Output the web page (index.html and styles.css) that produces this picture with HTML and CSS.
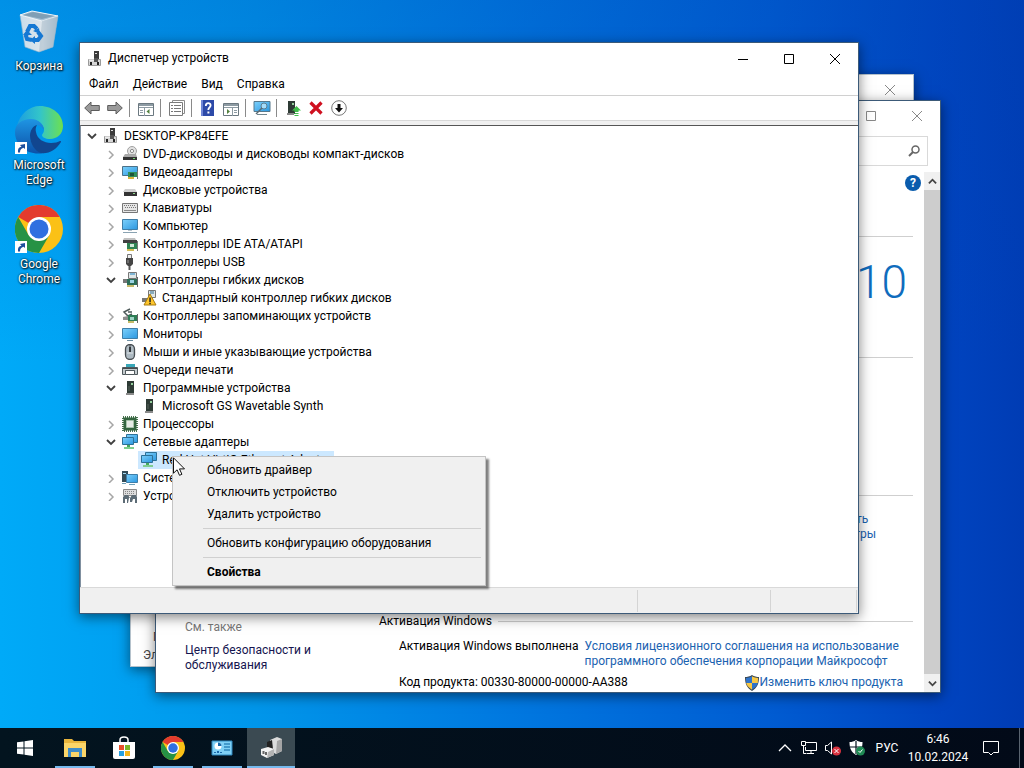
FILE: index.html
```
<!DOCTYPE html>
<html lang="ru">
<head>
  <meta charset="UTF-8">
  <title>Диспетчер устройств</title>
  <link rel="stylesheet" href="styles.css">
</head>
<body>

  <!-- Иконки -->
  <svg class="sprite" aria-hidden="true">
    <defs>
      <linearGradient id="g-scr" x1="0" y1="0" x2="1" y2="1"><stop offset="0" stop-color="#7cd0fb"/><stop offset="1" stop-color="#2b97e0"/></linearGradient>
      <linearGradient id="g-bin" x1="0" y1="0" x2="1" y2="0"><stop offset="0" stop-color="#c9dcea"/><stop offset=".6" stop-color="#dfe6ec"/><stop offset="1" stop-color="#9fb9cd"/></linearGradient>
      <linearGradient id="g-edge1" x1="0" y1="0" x2="1" y2="0"><stop offset="0" stop-color="#1c9de0"/><stop offset=".5" stop-color="#33c5c9"/><stop offset="1" stop-color="#6ee04f"/></linearGradient>
      <linearGradient id="g-edge2" x1="0" y1="0" x2="0" y2="1"><stop offset="0" stop-color="#1f95e3"/><stop offset="1" stop-color="#0c51a8"/></linearGradient>
    </defs>

    <symbol id="i-root" viewBox="0 0 16 16">
      <path d="M7 0h5v9H7z" fill="#3b3b3b"/><path d="M8 2h2v1H8z" fill="#ddd"/>
      <path d="M1.500 8.500h12v6h-12z" fill="#d6d6d6" stroke="#9a9a9a"/><path d="M7 7h4v4H7z" fill="#555"/>
      <path d="M3 11h2v3H3zM10 11h2v3h-2z" fill="#222"/><path d="M2 9h5" stroke="#fff"/>
    </symbol>
    <symbol id="i-dvd" viewBox="0 0 16 16">
      <circle cx="10" cy="5" r="4.500" fill="#e2e2e2" stroke="#a0a0a0"/><circle cx="10" cy="5" r="1.600" fill="#fff" stroke="#8a8a8a"/>
      <path d="M3 8h11l1 3H1z" fill="#a9a9a9"/><path d="M1 11h14v3H1z" fill="#333"/><path d="M11 12h2v1h-2z" fill="#6fd46f"/>
    </symbol>
    <symbol id="i-video" viewBox="0 0 16 16">
      <path d="M.5 2.500h15v9H.5z" fill="url(#g-scr)" stroke="#4c7188"/>
      <path d="M6 8h9v5H6z" fill="#2f8f5b"/><path d="M8 9h4v3H8z" fill="#1e5438"/><path d="M6 13h6v2H6z" fill="#d9b13b"/><path d="M15.500 7v8" stroke="#777"/>
    </symbol>
    <symbol id="i-disk" viewBox="0 0 16 16">
      <path d="M3 7h10l2 3H1z" fill="#cfcfcf"/><path d="M2 10h13v4H2z" fill="#333"/><path d="M11 11h2v1h-2z" fill="#8fd88f"/>
    </symbol>
    <symbol id="i-keyb" viewBox="0 0 16 16">
      <path d="M.5 3.500h15v9H.5z" fill="#e6e6e6" stroke="#777"/>
      <path d="M2 5.500h12M3 7.500h12" stroke="#777" stroke-dasharray="1 1"/><path d="M2 10.500h12" stroke="#888"/>
    </symbol>
    <symbol id="i-pc" viewBox="0 0 16 16">
      <path d="M.5 1.500h15v10H.5z" fill="url(#g-scr)" stroke="#3e7ea8"/><path d="M1 14.500h14" stroke="#8aa3b2"/><path d="M6 12h4v1H6z" fill="#b9c6cf"/>
    </symbol>
    <symbol id="i-ide" viewBox="0 0 16 16">
      <path d="M2 2h11l1 2H1z" fill="#c0c0c0"/><path d="M1 4h14v3H1z" fill="#404040"/>
      <path d="M5 7h10v6H5z" fill="#2f8253"/><path d="M8 8h4v3H8z" fill="#cfe8d8"/><path d="M5 13h7v2H5z" fill="#d3bd57"/><path d="M15.500 5v10" stroke="#777"/>
    </symbol>
    <symbol id="i-usb" viewBox="0 0 16 16">
      <path d="M5.500.5h4v4h-4z" fill="#eee" stroke="#777"/><path d="M4 4h7v6l-2 2H6l-2-2z" fill="#454545"/><path d="M7.500 12v4" stroke="#555" stroke-width="2"/><path d="M6 6v3" stroke="#999"/>
    </symbol>
    <symbol id="i-fdc" viewBox="0 0 16 16">
      <path d="M6.500.5h8v6h-8z" fill="#dfe6e6" stroke="#777"/><path d="M8 1h5v2H8z" fill="#7eb4d4"/>
      <path d="M1 7h8v4H1z" fill="#777"/><path d="M5 7h10v6H5z" fill="#2d6e59"/><path d="M8 8h4v3H8z" fill="#9ed3e5"/><path d="M5 13h7v2H5z" fill="#c7ba6a"/><path d="M15.500 5v10" stroke="#666"/>
    </symbol>
    <symbol id="i-warn" viewBox="0 0 16 16">
      <path d="M7.500.5h7v7h-7z" fill="#dfe6e6" stroke="#777"/><path d="M9 1h4v3H9z" fill="#8ab"/><path d="M1 8h6v4H1z" fill="#777"/>
      <path d="M9 4l6 11H3z" fill="#ffc62b" stroke="#a77b10"/><path d="M8.300 7.500h1.500V12H8.300zM8.300 12.800h1.500v1.400H8.300z" fill="#222"/>
    </symbol>
    <symbol id="i-stor" viewBox="0 0 16 16">
      <path d="M8 1L2 4l4 4 4-2M6 4h4" stroke="#4f5b5b" stroke-width="1.500" fill="none"/>
      <path d="M1 9l5-1h2v4H1z" fill="#8d8d8d"/><path d="M6 7h9v6H6z" fill="#2e7d55"/><path d="M8 9h4v3H8z" fill="#9ed3c5"/><path d="M6 13h6v2H6z" fill="#c7ba6a"/><path d="M15.500 6v9" stroke="#666"/>
    </symbol>
    <symbol id="i-mon" viewBox="0 0 16 16">
      <path d="M.5 2.500h15v10H.5z" fill="url(#g-scr)" stroke="#3e7ea8"/><path d="M5 14.500h6" stroke="#6c8ea3"/>
    </symbol>
    <symbol id="i-mouse" viewBox="0 0 16 16">
      <rect x="3.500" y=".5" width="9" height="15" rx="4.500" fill="#aebac2" stroke="#474d52" stroke-width="1.300"/><path d="M8 1v7" stroke="#474d52"/><rect x="7" y="3" width="2" height="5" fill="#33383c"/><path d="M5 9h6" stroke="#dfe5e9"/>
    </symbol>
    <symbol id="i-print" viewBox="0 0 16 16">
      <path d="M4 2h9v3H4z" fill="#38a7b8"/><path d="M.5 12.500v-7h15v7h-3v-4h-9v4z" fill="#c3cacd" stroke="#4f585c"/><path d="M3.500 8.500h9v4h-9z" fill="#fff" stroke="#4f585c"/><path d="M1 6.500h14" stroke="#454b4e"/>
    </symbol>
    <symbol id="i-soft" viewBox="0 0 16 16">
      <path d="M5 1h7v12H5z" fill="#2e3b35"/><path d="M9 3h2v2H9z" fill="#95cf9d"/><path d="M4 13h8v2H4z" fill="#8b8b8b"/><path d="M7 6v5" stroke="#56655d"/>
    </symbol>
    <symbol id="i-cpu" viewBox="0 0 16 16">
      <path d="M1 1h14v14H1z" fill="none" stroke="#48734f" stroke-width="2" stroke-dasharray="1 1"/><path d="M1.500 1.500h13v13h-13z" fill="#34653f"/><path d="M4.500 4.500h7v7h-7z" fill="#e6ece6" stroke="#a7c3aa"/>
    </symbol>
    <symbol id="i-net" viewBox="0 0 16 16">
      <path d="M4.500.5h11v8h-11z" fill="url(#g-scr)" stroke="#2d7096"/><path d="M.5 3.500h11v7H.5z" fill="url(#g-scr)" stroke="#2d7096"/>
      <path d="M5 11h3v2H5z" fill="#46a75e"/><path d="M2 13h10v2H2z" fill="#7fce8e"/>
    </symbol>
    <symbol id="i-sys" viewBox="0 0 16 16">
      <path d="M0 1h6v11H0z" fill="#334c59"/><path d="M1 3h3v1H1z" fill="#a5dcf5"/><path d="M4.500 4.500h11v8h-11z" fill="url(#g-scr)" stroke="#3e7ea8"/><path d="M0 13.500h4M7 14.500h6" stroke="#6fa0b8"/>
    </symbol>
    <symbol id="i-hid" viewBox="0 0 16 16">
      <path d="M1.500 1.500h13v6h-13z" fill="#ddd" stroke="#8a8a8a"/><path d="M3 3.500h10M3 5.500h10" stroke="#888" stroke-dasharray="1 1"/>
      <path d="M1 15V9l2-2h3l2 3 2-3h4l1 2v6h-2v-4h-2l-1 3H8v-4H7l-1 5H5v-4H3v4z" fill="#5c6b75"/>
    </symbol>

    <symbol id="t-back" viewBox="0 0 16 16"><path d="M.7 8L7 2v3.500h8.300v5H7V14z" fill="#9a9a9a" stroke="#5c5c5c"/></symbol>
    <symbol id="t-fwd" viewBox="0 0 16 16"><path d="M15.300 8L9 2v3.500H.7v5H9V14z" fill="#9a9a9a" stroke="#5c5c5c"/></symbol>
    <symbol id="t-tree" viewBox="0 0 16 16"><path d="M.5 3.500h15v12H.5z" fill="#fff" stroke="#6b7880"/><path d="M1 4h14v2H1z" fill="#8d9ba3"/><path d="M1 7.500h14M6.500 7v9" stroke="#8d9ba3"/><path d="M2 10.500h3M2 12.500h3" stroke="#8d9ba3"/><path d="M11.500 9v5l-3-2.500z" fill="#53813f"/></symbol>
    <symbol id="t-prop" viewBox="0 0 16 16"><path d="M3.500.5h12v13h-12z" fill="#fff" stroke="#8b8b8b"/><path d="M.5 2.500h13v13H.5z" fill="#fff" stroke="#7a7a7a"/><path d="M5 5.500h7M5 8.500h7M5 11.500h7" stroke="#777"/><path d="M2 5.500h2M2 8.500h2M2 11.500h2" stroke="#777"/></symbol>
    <symbol id="t-help" viewBox="0 0 16 16"><path d="M1 0h13v16H1z" fill="#2d4aa8"/><path d="M1 0h2v16H1z" fill="#6f86d6"/><path d="M5.800 6c0-3.800 5-3.500 4.800-.5C10.500 7.300 8.300 7.500 8.300 10" fill="none" stroke="#fff" stroke-width="1.800"/><path d="M7.400 11.500h2v2h-2z" fill="#fff"/></symbol>
    <symbol id="t-act" viewBox="0 0 16 16"><path d="M.5 3.500h15v12H.5z" fill="#fff" stroke="#6b7880"/><path d="M1 4h14v2H1z" fill="#8d9ba3"/><path d="M1 7.500h14M9.500 7v9" stroke="#8d9ba3"/><path d="M11 10.500h3M11 12.500h3" stroke="#8d9ba3"/><path d="M4 9v5l3-2.500z" fill="#53813f"/></symbol>
    <symbol id="t-scan" viewBox="0 0 18 16"><path d="M1 1.500h16v10H1z" fill="url(#g-scr)" stroke="#56788c"/><path d="M4 14.500h10" stroke="#71858f"/><circle cx="11" cy="6" r="3" fill="#a5dcfa" stroke="#5d7f91"/><path d="M9 8l-6 6" stroke="#5b6a72" stroke-width="1.500"/></symbol>
    <symbol id="t-upd" viewBox="0 0 16 16"><path d="M3 1h7v13H3z" fill="#2e3b35"/><path d="M7 3h2v2H7z" fill="#95cf9d"/><path d="M2 13h7v2H2z" fill="#888"/><path d="M11.500 6l4.500 4.500h-2.500V12H9.500v-1.500H7z" fill="#41bd4b"/><path d="M9.500 13h4v1h-4zM9.500 15h4v1h-4z" fill="#41bd4b"/></symbol>
    <symbol id="t-del" viewBox="0 0 16 16"><path d="M2.500 2.500l11 11M13.500 2.500l-11 11" stroke="#cf1020" stroke-width="3.200"/></symbol>
    <symbol id="t-down" viewBox="0 0 16 16"><circle cx="8" cy="8" r="7.300" fill="#fff" stroke="#777"/><path d="M6.500 4h3v4H12l-4 4.500L4 8h2.500z" fill="#111"/></symbol>

    <symbol id="d-bin" viewBox="0 0 48 48">
      <path d="M5 8l5 32 14 5 14-5 5-31z" fill="url(#g-bin)" stroke="#8fb3cf" stroke-width=".6"/>
      <path d="M5 8l12-4 26 5-16 5z" fill="#a5c0d3" stroke="#edf4f8"/><path d="M8 8l10-3 21 4-12 3z" fill="#7f9fb5"/>
      <path d="M27 14l-3 31 14-5 5-31z" fill="#a8bccb" opacity=".55"/>
      <g fill="none" stroke="#1678d3" stroke-width="4"><path d="M12 25l3-6h4l3 3"/><path d="M23 25l3 4-3 4h-4"/><path d="M17 33l-5-1-1-3 1-3"/></g>
      <path d="M18 24l6-3 1 6zM20 29v8l-5-4zM8 28l4-5 5 5z" fill="#1678d3"/>
    </symbol>
    <symbol id="d-edge" viewBox="0 0 48 48">
      <path d="M2 20C5 8 14 0 25 0c13 0 23 9 23 20 0 8-6 13-13 13-5 0-8-2-8-4 0-1 2-2 2-5 0-6-6-10-12-10C10 14 4 17 2 20z" fill="url(#g-edge1)"/>
      <path d="M0 26C0 18 7 13 16 13c8 0 13 6 13 11 0 0-3-5-7-5-4 0-7 5-7 11 0 9 7 16 14 17-16 3-29-7-29-21z" fill="url(#g-edge2)"/>
      <path d="M15 30c0-6 3-10 7-11 0 0-2 3-1 7 1 7 8 11 15 11 4 0 7-1 9-2 1 0 1 0 1 1-5 8-12 12-20 11-6-2-11-9-11-17z" fill="#11468f"/>
    </symbol>
    <symbol id="d-chrome" viewBox="0 0 48 48">
      <circle cx="24" cy="24" r="24" fill="#fbc116"/>
      <path d="M24 24L3.200 12A24 24 0 0 1 44.800 12H24z" fill="#e33b2e"/>
      <path d="M3.200 12A24 24 0 0 0 24 48l10.400-18L24 36 13.600 30z" fill="#269245"/>
      <circle cx="24" cy="24" r="12" fill="#fff"/><circle cx="24" cy="24" r="9.500" fill="#2f6fe0"/>
    </symbol>
    <symbol id="d-short" viewBox="0 0 12 12"><path d="M0 0h12v12H0z" fill="#fff"/><path d="M3 10.500C2.500 7 4 5 6.500 4.800L5 3l5-1v5L8.500 5.700C6 6.500 5 8 5 10.500z" fill="#1d4f9c"/></symbol>
    <symbol id="s-shield" viewBox="0 0 16 16">
      <path d="M8 0c2 1.500 5 2 7 2 0 7-2 11-7 14C3 13 1 9 1 2c2 0 5-.5 7-2z" fill="#3a4650"/>
      <path d="M8 1.300V8H2.200C2 6 2 4.500 2 3c2 0 4-.5 6-1.700z" fill="#2f73c9"/><path d="M8 1.300V8h5.800C14 6 14 4.500 14 3c-2 0-4-.5-6-1.700z" fill="#f7c743"/>
      <path d="M8 8v6.800C4.500 12.500 2.700 10.500 2.200 8z" fill="#f7c743"/><path d="M8 8v6.800c3.500-2.300 5.300-4.300 5.800-6.800z" fill="#2f73c9"/>
    </symbol>
    <symbol id="c-open" viewBox="0 0 10 10"><path d="M1 3l4 4 4-4" fill="none" stroke="#404040" stroke-width="1.800"/></symbol>
    <symbol id="c-shut" viewBox="0 0 10 10"><path d="M3 2l4 4-4 4" fill="none" stroke="#a6a6a6" stroke-width="1.500"/></symbol>
    <symbol id="w-close" viewBox="0 0 10 10"><path d="M0 0l10 10M10 0L0 10" stroke="currentColor" fill="none"/></symbol>
    <symbol id="w-max" viewBox="0 0 10 10"><path d="M.5.5h9v9h-9z" stroke="currentColor" fill="none"/></symbol>
    <symbol id="w-min" viewBox="0 0 10 10"><path d="M0 5.500h10" stroke="currentColor" fill="none"/></symbol>
  </svg>

  <div class="desktop">
    <div class="shortcuts">
      <a class="shortcut" href="#">
        <span class="shortcut-pic"><svg><use href="#d-bin"/></svg></span>
        <span>Корзина</span>
      </a>
      <a class="shortcut" href="#">
        <span class="shortcut-pic"><svg><use href="#d-edge"/></svg><svg class="arrow"><use href="#d-short"/></svg></span>
        <span>Microsoft<br>Edge</span>
      </a>
      <a class="shortcut" href="#">
        <span class="shortcut-pic"><svg><use href="#d-chrome"/></svg><svg class="arrow"><use href="#d-short"/></svg></span>
        <span>Google<br>Chrome</span>
      </a>
    </div>

    <!-- Панель управления -->
    <section class="window panel-window">
      <header class="titlebar inactive">
        <button class="win-btn" aria-label="Закрыть"><svg><use href="#w-close"/></svg></button>
      </header>
      <div class="panel-body">
        <span class="panel-item indent">П</span>
        <span class="panel-item">Эл</span>
      </div>
    </section>

    <!-- Система -->
    <section class="window system-window">
      <header class="titlebar inactive">
        <button class="win-btn" aria-label="Развернуть"><svg><use href="#w-max"/></svg></button>
        <button class="win-btn" aria-label="Закрыть"><svg><use href="#w-close"/></svg></button>
      </header>
      <div class="address">
        <input class="search" type="text" aria-label="Поиск">
        <svg class="search-icon" viewBox="0 0 12 12"><circle cx="7.500" cy="4.500" r="3.500" fill="none" stroke="#666" stroke-width="1.500"/><path d="M5 7L1 11" stroke="#666" stroke-width="2"/></svg>
      </div>
      <div class="system-body">
        <aside class="see-also">
          <span class="muted">См. также</span>
          <a href="#">Центр безопасности и<br>обслуживания</a>
        </aside>
        <main class="system-main">
          <div class="block"></div>
          <div class="block ruled edition"><span>10</span></div>
          <div class="block ruled"></div>
          <div class="block ruled change"><a href="#">Изменить<br>параметры</a></div>
          <div class="activation">
            <h2>Активация Windows</h2>
            <div class="activation-row">
              <span>Активация Windows выполнена</span>
              <a href="#">Условия лицензионного соглашения на использование<br>программного обеспечения корпорации Майкрософт</a>
            </div>
            <div class="activation-row key-row">
              <span>Код продукта: 00330-80000-00000-AA388</span>
              <a class="key-link" href="#"><svg><use href="#s-shield"/></svg>Изменить ключ продукта</a>
            </div>
          </div>
        </main>
        <button class="help" aria-label="Справка">?</button>
        <div class="scrollbar">
          <button aria-label="Вверх"><svg viewBox="0 0 10 10"><path d="M1 7l4-4 4 4" fill="none" stroke="#444" stroke-width="2"/></svg></button>
          <div class="thumb"></div>
          <button aria-label="Вниз"><svg viewBox="0 0 10 10"><path d="M1 3l4 4 4-4" fill="none" stroke="#444" stroke-width="2"/></svg></button>
        </div>
      </div>
    </section>

    <!-- Диспетчер устройств -->
    <section class="window device-window">
      <header class="titlebar">
        <svg class="ico"><use href="#i-root"/></svg>
        <h1>Диспетчер устройств</h1>
        <button class="win-btn" aria-label="Свернуть"><svg><use href="#w-min"/></svg></button>
        <button class="win-btn" aria-label="Развернуть"><svg><use href="#w-max"/></svg></button>
        <button class="win-btn" aria-label="Закрыть"><svg><use href="#w-close"/></svg></button>
      </header>
      <nav class="menubar">
        <button>Файл</button>
        <button>Действие</button>
        <button>Вид</button>
        <button>Справка</button>
      </nav>
      <div class="toolbar">
        <button aria-label="Назад"><svg class="ico"><use href="#t-back"/></svg></button>
        <button aria-label="Вперед"><svg class="ico"><use href="#t-fwd"/></svg></button>
        <i class="sep"></i>
        <button aria-label="Дерево консоли"><svg class="ico"><use href="#t-tree"/></svg></button>
        <i class="sep"></i>
        <button aria-label="Свойства"><svg class="ico"><use href="#t-prop"/></svg></button>
        <i class="sep"></i>
        <button aria-label="Справка"><svg class="ico"><use href="#t-help"/></svg></button>
        <button aria-label="Панель действий"><svg class="ico"><use href="#t-act"/></svg></button>
        <i class="sep"></i>
        <button aria-label="Обновить конфигурацию"><svg class="ico wide"><use href="#t-scan"/></svg></button>
        <i class="sep"></i>
        <button aria-label="Обновить драйвер"><svg class="ico"><use href="#t-upd"/></svg></button>
        <button aria-label="Удалить"><svg class="ico"><use href="#t-del"/></svg></button>
        <button aria-label="Отключить"><svg class="ico"><use href="#t-down"/></svg></button>
      </div>

      <div class="tree">
        <div class="node"><button class="tog" aria-label="Свернуть"><svg><use href="#c-open"/></svg></button><svg class="ico"><use href="#i-root"/></svg><span>DESKTOP-KP84EFE</span></div>
        <div class="level">
          <div class="node"><button class="tog" aria-label="Развернуть"><svg><use href="#c-shut"/></svg></button><svg class="ico"><use href="#i-dvd"/></svg><span>DVD-дисководы и дисководы компакт-дисков</span></div>
          <div class="node"><button class="tog" aria-label="Развернуть"><svg><use href="#c-shut"/></svg></button><svg class="ico"><use href="#i-video"/></svg><span>Видеоадаптеры</span></div>
          <div class="node"><button class="tog" aria-label="Развернуть"><svg><use href="#c-shut"/></svg></button><svg class="ico"><use href="#i-disk"/></svg><span>Дисковые устройства</span></div>
          <div class="node"><button class="tog" aria-label="Развернуть"><svg><use href="#c-shut"/></svg></button><svg class="ico"><use href="#i-keyb"/></svg><span>Клавиатуры</span></div>
          <div class="node"><button class="tog" aria-label="Развернуть"><svg><use href="#c-shut"/></svg></button><svg class="ico"><use href="#i-pc"/></svg><span>Компьютер</span></div>
          <div class="node"><button class="tog" aria-label="Развернуть"><svg><use href="#c-shut"/></svg></button><svg class="ico"><use href="#i-ide"/></svg><span>Контроллеры IDE ATA/ATAPI</span></div>
          <div class="node"><button class="tog" aria-label="Развернуть"><svg><use href="#c-shut"/></svg></button><svg class="ico"><use href="#i-usb"/></svg><span>Контроллеры USB</span></div>
          <div class="node"><button class="tog" aria-label="Свернуть"><svg><use href="#c-open"/></svg></button><svg class="ico"><use href="#i-fdc"/></svg><span>Контроллеры гибких дисков</span></div>
          <div class="level leaf">
            <div class="node"><svg class="ico"><use href="#i-warn"/></svg><span>Стандартный контроллер гибких дисков</span></div>
          </div>
          <div class="node"><button class="tog" aria-label="Развернуть"><svg><use href="#c-shut"/></svg></button><svg class="ico"><use href="#i-stor"/></svg><span>Контроллеры запоминающих устройств</span></div>
          <div class="node"><button class="tog" aria-label="Развернуть"><svg><use href="#c-shut"/></svg></button><svg class="ico"><use href="#i-mon"/></svg><span>Мониторы</span></div>
          <div class="node"><button class="tog" aria-label="Развернуть"><svg><use href="#c-shut"/></svg></button><svg class="ico"><use href="#i-mouse"/></svg><span>Мыши и иные указывающие устройства</span></div>
          <div class="node"><button class="tog" aria-label="Развернуть"><svg><use href="#c-shut"/></svg></button><svg class="ico"><use href="#i-print"/></svg><span>Очереди печати</span></div>
          <div class="node"><button class="tog" aria-label="Свернуть"><svg><use href="#c-open"/></svg></button><svg class="ico"><use href="#i-soft"/></svg><span>Программные устройства</span></div>
          <div class="level leaf">
            <div class="node"><svg class="ico"><use href="#i-soft"/></svg><span>Microsoft GS Wavetable Synth</span></div>
          </div>
          <div class="node"><button class="tog" aria-label="Развернуть"><svg><use href="#c-shut"/></svg></button><svg class="ico"><use href="#i-cpu"/></svg><span>Процессоры</span></div>
          <div class="node"><button class="tog" aria-label="Свернуть"><svg><use href="#c-open"/></svg></button><svg class="ico"><use href="#i-net"/></svg><span>Сетевые адаптеры</span></div>
          <div class="level leaf">
            <div class="node selected"><svg class="ico"><use href="#i-net"/></svg><span>Red Hat VirtIO Ethernet Adapter</span></div>
          </div>
          <div class="node"><button class="tog" aria-label="Развернуть"><svg><use href="#c-shut"/></svg></button><svg class="ico"><use href="#i-sys"/></svg><span>Системные устройства</span></div>
          <div class="node"><button class="tog" aria-label="Развернуть"><svg><use href="#c-shut"/></svg></button><svg class="ico"><use href="#i-hid"/></svg><span>Устройства HID</span></div>
        </div>
      </div>
      <footer class="statusbar"><span></span><span></span><span></span></footer>
    </section>

    <!-- Контекстное меню -->
    <div class="context-menu">
      <button>Обновить драйвер</button>
      <button>Отключить устройство</button>
      <button>Удалить устройство</button>
      <hr>
      <button>Обновить конфигурацию оборудования</button>
      <hr>
      <button class="default">Свойства</button>
    </div>
    <svg class="cursor" viewBox="0 0 12 19"><path d="M.5.800v15.400l3.600-3.400 2.400 5.500 2.400-1-2.400-5.400h5z" fill="#fff" stroke="#111"/></svg>
  </div>

  <!-- Панель задач -->
  <footer class="taskbar">
    <button class="task start" aria-label="Пуск"><svg viewBox="0 0 16 16"><path d="M0 2.300L6.500 1.400v6.100H0zM7.500 1.200L16 0v7.500H7.500zM0 8.500h6.500v6.100L0 13.700zM7.500 8.500H16V16l-8.500-1.200z" fill="#fff"/></svg></button>
    <button class="task open" aria-label="Проводник"><svg class="big" viewBox="0 0 24 24"><path d="M1 3h8l2 2h12v16H1z" fill="#e9b53c"/><path d="M1 7h22v14H1z" fill="#fbd568"/><path d="M5 12h14v9h-3v-5H8v5H5z" fill="#3f8cc8"/></svg></button>
    <button class="task" aria-label="Microsoft Store"><svg class="big" viewBox="0 0 24 24"><path d="M8 7V4c0-4 8-4 8 0v3" fill="none" stroke="#fff" stroke-width="1.500"/><path d="M1 6h22v15q0 2-2 2H3q-2 0-2-2z" fill="#fff"/><path d="M7 9h5v5H7z" fill="#e8502a"/><path d="M13 9h5v5h-5z" fill="#7cb727"/><path d="M7 15h5v5H7z" fill="#28a0e0"/><path d="M13 15h5v5h-5z" fill="#f5b51b"/></svg></button>
    <button class="task open" aria-label="Google Chrome"><svg class="big"><use href="#d-chrome"/></svg></button>
    <button class="task open" aria-label="Панель управления"><svg class="big" viewBox="0 0 24 24"><path d="M2 5h20v14H2z" fill="#7fd0f5" stroke="#2f86bd"/><circle cx="8" cy="10" r="3.500" fill="#fff"/><path d="M8 10V6.500a3.500 3.500 0 0 1 3.500 3.500z" fill="#1b68a8"/><path d="M14 8h6M14 11h6M14 14h6" stroke="#2f86bd" stroke-width="1.500"/><path d="M4 16h2v1H4zM7 15h2v2H7zM10 16h2v1h-2z" fill="#1b68a8"/></svg></button>
    <button class="task open active" aria-label="Диспетчер устройств"><svg class="big" viewBox="0 0 24 24"><path d="M11 4l7-3 5 2v12l-6 3-6-3z" fill="#dcdcdc"/><path d="M18 5l5-2v12l-6 3z" fill="#a5a5a5"/><path d="M8 6l5-2 1 9-6-1z" fill="#222"/><path d="M2 13l7-2 6 2v6l-7 3-6-3z" fill="#f2f2f2"/><path d="M9 16l6-3v6l-7 3z" fill="#b4b4b4"/><path d="M3.500 15h2v3h-2zM6 16h2v3H6z" fill="#666"/></svg></button>

    <div class="tray">
      <button class="tray-btn" aria-label="Скрытые значки"><svg viewBox="0 0 16 16"><path d="M2 11l6-6 6 6" fill="none" stroke="#fff" stroke-width="1.300"/></svg></button>
      <button class="tray-btn" aria-label="Сеть"><svg viewBox="0 0 16 16"><path d="M4.500 2.500h11v8h-11M4.500 7v3.500M10 10.500v3M6 13.500h7M.5 1.500h4v4h-4zM2.500 5.500v8h3" fill="none" stroke="#fff"/></svg></button>
      <button class="tray-btn" aria-label="Звук"><svg viewBox="0 0 16 16"><path d="M.5 5.500h2l4-3.500v12l-4-3.500h-2z" fill="none" stroke="#fff"/><circle cx="11.500" cy="11" r="4.500" fill="#d8323f"/><path d="M9.500 9l4 4M13.500 9l-4 4" stroke="#fff"/></svg></button>
      <button class="tray-btn" aria-label="Безопасность"><svg viewBox="0 0 16 16"><path d="M7 0c2 1.500 4 2 6.500 2 0 7-2 10-6.500 13C2.500 12 .5 9 .5 2 3 2 5 1.500 7 0z" fill="#fff"/><path d="M7 1v13M1 7h12" stroke="#03101c" stroke-width="1.200"/><circle cx="11.500" cy="11" r="4.500" fill="#1f8a54"/><path d="M9.500 11l1.500 1.500 2.500-3" stroke="#fff" fill="none"/></svg></button>
      <button class="lang">РУС</button>
      <button class="clock">6:46<br>10.02.2024</button>
      <button class="notify" aria-label="Уведомления"><svg viewBox="0 0 16 16"><path d="M.5 1.500h15v11h-5L8 15l-2.500-2.500h-5z" fill="none" stroke="#fff"/></svg></button>
      <button class="peek" aria-label="Показать рабочий стол"></button>
    </div>
  </footer>

</body>
</html>
```
FILE: styles.css
```
* {
  box-sizing: border-box;
}
html, body {
  height: 100%;
}
body {
  margin: 0;
  display: flex;
  flex-direction: column;
  overflow: hidden;
  font-family: Roboto, "Noto Sans", sans-serif;
  font-size: 12px;
  line-height: 15px;
  color: #000;
}
button {
  font: inherit;
  color: inherit;
  background: none;
  border: none;
  padding: 0;
  margin: 0;
  display: flex;
  align-items: center;
  justify-content: center;
}
a {
  color: #1a62b0;
  text-decoration: none;
}
.sprite {
  position: absolute;
  width: 0;
  height: 0;
}
.ico {
  width: 16px;
  height: 16px;
  flex: none;
}
.ico.wide {
  width: 18px;
}

/* рабочий стол */
.desktop {
  position: relative;
  flex: 1;
  overflow: hidden;
  background:
    linear-gradient(180deg, rgba(0, 70, 180, 0.25), rgba(0, 70, 180, 0) 50%),
    linear-gradient(90deg, #00aaf8 0%, #0096ea 25%, #0078e0 50%, #005cd2 75%, #0044c0 92%, #003cb4 100%);
}
.shortcuts {
  width: 78px;
  padding-top: 7px;
}
.shortcut {
  display: flex;
  flex-direction: column;
  align-items: center;
  gap: 4px;
  height: 99px;
  color: #fff;
  text-align: center;
  text-shadow: 1px 1px 2px #000, 0 0 2px #000;
}
.shortcut-pic {
  position: relative;
  width: 48px;
  height: 48px;
}
.shortcut-pic svg {
  width: 48px;
  height: 48px;
}
.shortcut-pic .arrow {
  position: absolute;
  left: 0;
  bottom: 0;
  width: 12px;
  height: 12px;
}

/* окна */
.window {
  position: absolute;
  display: flex;
  flex-direction: column;
  background: #fff;
  border: 1px solid #3c5a78;
  box-shadow: 0 3px 12px rgba(0, 0, 0, 0.5);
}
.panel-window {
  inset: 74px 110px 61px 130px;
  border-color: #b5c2cc;
}
.system-window {
  inset: 100px 83px 35px 155px;
}
.device-window {
  inset: 42px 165px 114px 79px;
}
.titlebar {
  display: flex;
  align-items: center;
  height: 31px;
  padding-left: 7px;
  flex: none;
}
.titlebar h1 {
  margin: 0 auto 0 5px;
  font-size: 12px;
  font-weight: normal;
}
.titlebar.inactive {
  height: 29px;
  justify-content: flex-end;
  color: #888;
}
.win-btn {
  width: 46px;
  height: 29px;
}
.win-btn svg {
  width: 10px;
  height: 10px;
}

.panel-body {
  flex: 1;
  display: flex;
  flex-direction: column;
  justify-content: flex-end;
  gap: 3px;
  padding: 0 12px 3px;
  color: #444;
}
.panel-item.indent {
  padding-left: 10px;
}

/* система */
.address {
  display: flex;
  justify-content: flex-end;
  position: relative;
  padding: 6px 12px 6px 0;
}
.search {
  width: 180px;
  height: 30px;
  border: 1px solid #d9d9d9;
  font: inherit;
}
.search-icon {
  position: absolute;
  right: 20px;
  top: 15px;
  width: 12px;
  height: 12px;
}
.system-body {
  position: relative;
  flex: 1;
  min-height: 0;
  display: flex;
}
.see-also {
  width: 195px;
  padding: 0 0 19px 29px;
  display: flex;
  flex-direction: column;
  justify-content: flex-end;
  gap: 8px;
}
.see-also a {
  color: #15154f;
}
.muted {
  color: #777;
}
.system-main {
  flex: 1;
  display: grid;
  grid-template-rows: 64px 121px 138px 119px 1fr;
  padding: 0 11px 0 28px;
}
.block.ruled {
  border-top: 1px solid #cfcfcf;
}
.edition {
  display: flex;
  justify-content: flex-end;
  padding: 10px 6px 0;
  font-size: 46px;
  font-weight: 300;
  line-height: 70px;
  color: #0f6cbd;
}
.change {
  display: flex;
  justify-content: flex-end;
  padding: 16px 37px 0;
}
.activation h2 {
  display: flex;
  align-items: center;
  gap: 6px;
  margin: 0 0 10px;
  font-size: 12px;
  font-weight: normal;
}
.activation h2::after {
  content: "";
  flex: 1;
  border-top: 1px solid #cfcfcf;
}
.activation-row {
  display: flex;
  gap: 6px;
  padding-left: 20px;
  margin-bottom: 6px;
  white-space: nowrap;
}
.key-row {
  justify-content: space-between;
  padding-right: 10px;
}
.key-link {
  display: flex;
}
.key-link svg {
  width: 16px;
  height: 16px;
}
.help {
  position: absolute;
  top: 3px;
  right: 19px;
  width: 16px;
  height: 16px;
  border-radius: 50%;
  background: #0a5cad;
  color: #fff;
  font-weight: bold;
}
.scrollbar {
  width: 16px;
  display: flex;
  flex-direction: column;
  background: #f0f0f0;
}
.scrollbar button {
  height: 18px;
}
.scrollbar svg {
  width: 9px;
  height: 9px;
}
.thumb {
  flex: 1;
  background: #cdcdcd;
}

/* диспетчер устройств */
.menubar {
  display: flex;
  gap: 14px;
  height: 21px;
  padding: 0 9px;
}
.toolbar {
  display: flex;
  align-items: center;
  height: 26px;
  border-top: 1px solid #d0d0d0;
  border-bottom: 1px solid #d8d8d8;
}
.toolbar button {
  width: 23px;
  height: 22px;
}
.sep {
  width: 1px;
  height: 18px;
  margin: 0 4px 0 3px;
  background: #8a8a8a;
}
.tree {
  flex: 1;
  min-height: 0;
  overflow: hidden;
  padding: 1px 0 0 3px;
  border-top: 1px solid #555;
  border-left: 1px solid #8090a0;
  box-shadow: 0 -4px 0 #f0f0f0;
  margin-top: 4px;
}
.node {
  display: flex;
  align-items: center;
  height: 18px;
  white-space: nowrap;
}
.node span {
  margin-left: 5px;
}
.tog {
  width: 16px;
  height: 18px;
  margin-right: 3px;
}
.tog svg {
  width: 10px;
  height: 10px;
}
.level {
  padding-left: 19px;
}
.level.leaf {
  padding-left: 35px;
}
.leaf .node {
  padding: 0 3px;
}
.selected {
  width: fit-content;
  background: #cce8ff;
}
.statusbar {
  display: flex;
  height: 26px;
  padding: 2px 1px 1px 0;
  background: #f0f0f0;
  border-top: 1px solid #d9d9d9;
}
.statusbar span {
  flex: 1;
  border-right: 1px solid #d4d4d4;
}
.statusbar span:nth-child(2) {
  flex: 0 0 133px;
}
.statusbar span:nth-child(3) {
  flex: 0 0 86px;
}

/* контекстное меню */
.context-menu {
  position: absolute;
  left: 172px;
  top: 456px;
  min-width: 314px;
  padding: 2px;
  background: #f0f0f0;
  border: 1px solid #c4c4c4;
  box-shadow: 3px 3px 2px rgba(0, 0, 0, 0.5);
}
.context-menu button {
  width: 100%;
  height: 22px;
  padding: 0 32px;
  justify-content: flex-start;
}
.context-menu hr {
  margin: 3px 2px 3px 28px;
  border: none;
  border-top: 1px solid #d0d0d0;
}
.context-menu .default {
  font-weight: bold;
}
.cursor {
  position: absolute;
  left: 173px;
  top: 457px;
  width: 12px;
  height: 19px;
}

/* панель задач */
.taskbar {
  display: flex;
  gap: 1px;
  height: 40px;
  flex: none;
  background: linear-gradient(90deg, #03141f, #020a18);
  color: #fff;
}
.task {
  position: relative;
  width: 48px;
}
.task.start {
  width: 50px;
}
.task svg {
  width: 16px;
  height: 16px;
}
.task svg.big {
  width: 24px;
  height: 24px;
}
.task.open::after {
  content: "";
  position: absolute;
  left: 4px;
  right: 4px;
  bottom: 0;
  height: 2px;
  background: #76b9ed;
}
.task.active {
  background: #3b4a52;
}
.task.active::after {
  left: 0;
  right: 0;
}
.tray {
  display: flex;
  align-items: stretch;
  margin-left: auto;
}
.tray-btn {
  width: 24px;
}
.tray svg {
  width: 16px;
  height: 16px;
}
.lang {
  width: 36px;
}
.clock {
  width: 66px;
  line-height: 18px;
}
.notify {
  width: 40px;
}
.peek {
  width: 5px;
  margin-left: 8px;
  border-left: 1px solid #5a6470;
}
```
